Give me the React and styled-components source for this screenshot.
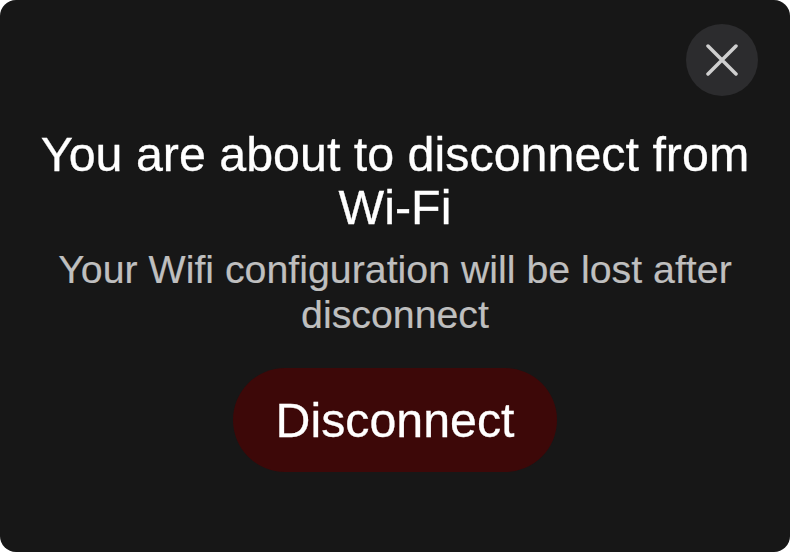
import styled, { createGlobalStyle } from "styled-components";

const GlobalStyle = createGlobalStyle`
  html, body {
    margin: 0;
    padding: 0;
    background: #ffffff;
  }
  body {
    font-family: "Liberation Sans", Arial, sans-serif;
  }
`;

const Modal = styled.div`
  position: relative;
  box-sizing: border-box;
  width: 790px;
  height: 552px;
  border-radius: 16px;
  background: #171717;
  display: flex;
  flex-direction: column;
  align-items: center;
  padding-top: 128px;
`;

const CloseButton = styled.button`
  position: absolute;
  top: 24px;
  right: 32px;
  width: 72px;
  height: 72px;
  border: none;
  border-radius: 50%;
  background: #2c2c2e;
  display: flex;
  align-items: center;
  justify-content: center;
  padding: 0;
  cursor: pointer;
`;

const Title = styled.h1`
  margin: 0;
  font-size: 48.4px;
  line-height: 53px;
  font-weight: 400;
  color: #ffffff;
  text-align: center;
  max-width: 730px;
  -webkit-text-stroke: 0.3px #ffffff;
`;

const Subtitle = styled.p`
  margin: 13px 0 0;
  font-size: 39.3px;
  line-height: 45px;
  color: #bfbfbf;
  text-align: center;
  max-width: 700px;
  -webkit-text-stroke: 0.2px #bfbfbf;
`;

const DangerButton = styled.button`
  margin-top: 31px;
  width: 324px;
  height: 104px;
  border: none;
  border-radius: 52px;
  background: #3d0808;
  color: #ffffff;
  font-family: inherit;
  font-size: 48.3px;
  cursor: pointer;
  -webkit-text-stroke: 0.3px #ffffff;
`;

const CloseIcon = () => (
  <svg width="32" height="32" viewBox="0 0 32 32" fill="none">
    <path
      d="M2 2 L30 30 M30 2 L2 30"
      stroke="#cfcfcf"
      strokeWidth="3.5"
      strokeLinecap="round"
    />
  </svg>
);

export default function App() {
  return (
    <>
      <GlobalStyle />
      <Modal>
        <CloseButton aria-label="Close">
          <CloseIcon />
        </CloseButton>
        <Title>You are about to disconnect from Wi-Fi</Title>
        <Subtitle>Your Wifi configuration will be lost after disconnect</Subtitle>
        <DangerButton>Disconnect</DangerButton>
      </Modal>
    </>
  );
}
